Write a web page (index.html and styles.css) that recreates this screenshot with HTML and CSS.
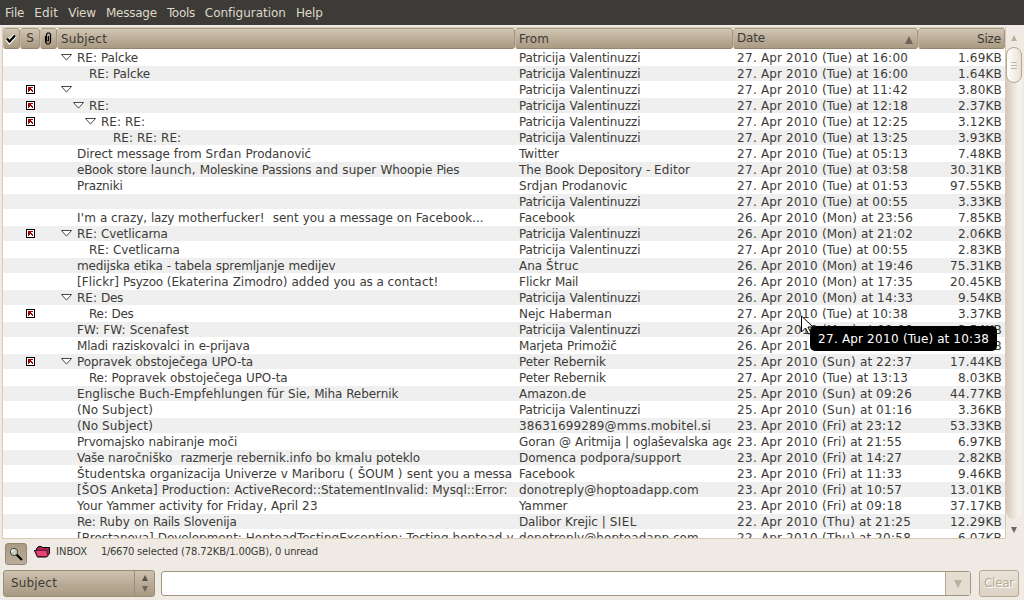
FILE: index.html
```html
<!DOCTYPE html>
<html lang="en">
<head>
<meta charset="utf-8">
<title>INBOX</title>
<link rel="stylesheet" href="styles.css">
</head>
<body>
<svg class="defs" width="0" height="0">
  <symbol id="reply" viewBox="0 0 9 9"><g shape-rendering="crispEdges"><path fill="#000" d="M0 0h9v9H0z"/><path fill="#fff" d="M1 1h7v7H1z"/><path fill="#a00000" d="M2 2h5v1H5v1h1v1h1v2H6V6H5V5H4v1H3v1H2z"/></g></symbol>
  <symbol id="open" viewBox="0 0 11 7"><path d="M.5 .5h10l-5 5.600z" fill="#fff" stroke="#333" stroke-width=".9"/></symbol>
</svg>
<nav class="menu"><a class="t">File</a><a class="t">Edit</a><a class="t">View</a><a class="t">Message</a><a class="t">Tools</a><a class="t">Configuration</a><a class="t">Help</a></nav>
<main class="pane">
  <section class="list">
    <header class="cols head">
      <div class="h icon check"><svg width="12" height="12" viewBox="0 0 12 12"><path d="M2 5.500l2.500 3L10 2.500" fill="none" stroke="#fff" stroke-width="4.500"/><path d="M2 5.500l2.500 3L10 2.500" fill="none" stroke="#000" stroke-width="2.400"/></svg></div>
      <div class="h icon">S</div>
      <div class="h icon clip"><svg width="8" height="13" viewBox="0 0 8 13"><path d="M1.500 4v6l1.500 2h2l1.500-2V2.500L5.500 1h-2L2.500 2.500v6.500h2V4" fill="none" stroke="#000" stroke-width="1.200"/></svg></div>
      <div class="h"><span class="t">Subject</span></div><div class="h"><span class="t">From</span></div>
      <div class="h date"><span class="t">Date</span><i class="sort"></i></div><div class="h right"><span class="t">Size</span></div>
    </header>
    <div class="rows" id="rows"></div>
  </section>
  <aside class="scroll"><i class="up"></i><div class="track"><div class="thumb"><b></b><b></b><b></b></div></div><i class="down"></i></aside>
</main>
<footer>
  <div class="status">
    <span class="find"><svg width="14" height="14" viewBox="0 0 14 14"><path d="M7 7l6 6" stroke="#000" stroke-width="2.200"/><circle cx="5" cy="5" r="3.600" fill="#c8cdbc" stroke="#444"/><path d="M3 5V3h2" stroke="#fff" fill="none"/></svg></span>
    <svg class="folder" width="17" height="13" viewBox="0 0 17 13"><path d="M2.500 5.500v-2l2-2h3l1 1h7v6l-3 3.500H3.500L.5 5.500z" fill="#a3224e" stroke="#000"/><path d="M1 5.500h11.500l1.500 6H3.500z" fill="#e64578" stroke="#000" stroke-width=".5"/></svg>
    <span class="box t">INBOX</span><span class="count t">1/6670 selected (78.72KB/1.00GB), 0 unread</span>
  </div>
  <div class="search">
    <div class="combo"><span class="t">Subject</span><span class="spin"><i class="up"></i><i class="down"></i></span></div>
    <div class="entry"><span class="field"></span><span class="drop"><i></i></span></div>
    <div class="clear"><span class="t">Clear</span></div>
  </div>
</footer>
<svg class="pointer" width="13" height="20" viewBox="0 0 13 20"><path d="M.5 1v16l4-4 3 6 2.500-1-3-6H12z" fill="#fff" stroke="#000"/></svg>
<div class="tip t">27. Apr 2010 (Tue) at 10:38</div>
<script src="rows.js"></script>
</body>
</html>
```
FILE: styles.css
```css
* { box-sizing: border-box; }
body { margin: 0; width: 1024px; height: 600px; overflow: hidden; background: #efebe4; color: #3c3b37; font: 12px "DejaVu Sans", sans-serif; display: flex; flex-direction: column; position: relative; }
.defs { position: absolute; }
.t { white-space: pre; }
.menu { height: 25px; flex: none; background: #3c3b37; color: #dfd8c8; display: flex; gap: 10px; padding-left: 5px; line-height: 27px; }
.pane { display: flex; height: 514px; flex: none; padding: 2px 0 0 2px; }
.list { width: 1004px; height: 512px; border: 1px solid #d8cbb5; overflow: hidden; display: flex; flex-direction: column; background: #fff; }
.cols { display: grid; grid-template-columns: 17px 20px 17px 458px 218px 185px 87px; }
.head { height: 21px; flex: none; }
.h { height: 21px; border: 1px solid #a39680; border-top: 1px solid #a89b87; border-bottom-color: #94866f; border-left-color: #c3b6a2; border-radius: 3px; background: linear-gradient(#d1c5b4, #bcae99 50%, #a99a82); line-height: 21px; padding: 0 3px; }
.icon { padding: 0; display: flex; align-items: center; justify-content: center; }
.check, .clip { padding-right: 1px; }
.date { display: flex; justify-content: space-between; align-items: center; padding-right: 4px; }
.right { text-align: right; }
.sort { border: 4px solid transparent; border-top: 0; border-bottom: 8px solid #6d6559; margin-top: 2px; }
.rows { flex: 1; overflow: hidden; }
.row { height: 16px; line-height: 18px; white-space: pre; }
.row:nth-child(even) { background: linear-gradient(#fff 1px, #efefef 1px); }
.row > span { overflow: hidden; height: 16px; padding-left: 4px; margin-right: 2px; }
.row > .flag { padding: 4px 0 0 6px; margin: 0; }
.flag svg { display: block; }
.row > .subject { display: flex; align-items: flex-start; }
.subject > svg, .subject > i { flex: none; width: 11px; height: 7px; margin: 5px 5px 0 0; }
.row > .d1 { padding-left: 16px; }
.row > .d2 { padding-left: 28px; }
.row > .d3 { padding-left: 40px; }
.row > .size { text-align: right; margin-right: 3px; }
.scroll { width: 18px; display: flex; flex-direction: column; align-items: center; padding: 8px 2px 5px 0; }
.up { border: 3px solid transparent; border-top: 0; border-bottom: 6px solid #b9ad97; }
.down { border: 3px solid transparent; border-bottom: 0; border-top: 6px solid #6d6559; }
.track { width: 16px; height: 472px; margin: 6px 0 8px; border-radius: 8px; background: linear-gradient(90deg, #d5cab9, #f3efe9 70%); }
.thumb { width: 16px; height: 36px; border: 1px solid #b5a78f; border-radius: 8px; background: linear-gradient(90deg, #fff, #e9e1d5); display: flex; flex-direction: column; gap: 2px; justify-content: center; align-items: center; }
.thumb b { width: 6px; height: 1px; background: #c2b7a4; }
.status { height: 31px; display: flex; padding: 4px 0 0 5px; font-size: 10px; line-height: 17px; }
.find { width: 22px; height: 22px; border: 1px solid #94866f; border-radius: 3px; background: linear-gradient(#a99a83, #bbae9b); display: flex; align-items: center; justify-content: center; }
.folder { margin: 2px 5px 0 7px; }
.box { width: 45px; }
.search { height: 27px; display: flex; padding-left: 3px; }
.combo { width: 152px; border: 1px solid #9b8d76; border-radius: 3px; background: linear-gradient(#cdc1b0, #b9ac97 50%, #a99a82); display: flex; justify-content: space-between; line-height: 25px; padding-left: 7px; }
.spin { width: 20px; border-left: 1px solid #9b8d76; display: flex; flex-direction: column; gap: 5px; align-items: center; justify-content: center; }
.spin .up { border-bottom-color: #595249; }
.entry { width: 810px; height: 25px; margin: 1px 8px 0 6px; border: 1px solid #a29580; border-radius: 3px; background: #fff; display: flex; }
.field { flex: 1; }
.drop { width: 25px; border-left: 1px solid #b5a993; background: #e5ddd1; display: flex; align-items: center; justify-content: center; }
.drop i { border: 4px solid transparent; border-bottom: 0; border-top: 8px solid #bdb19d; }
.clear { width: 40px; border: 1px solid #b5a993; border-radius: 3px; background: linear-gradient(#e9e2d8, #dcd2c4); color: #b7aa94; text-shadow: 1px 1px #fff; text-align: center; line-height: 25px; }
.tip { position: absolute; left: 810px; top: 326px; width: 187px; height: 25px; border-radius: 5px; background: #000; color: #fff; line-height: 26px; padding-left: 8px; }
.pointer { position: absolute; left: 801px; top: 315px; }
```
FILE: rows.js
```js
// [flagged, depth, expandable, subject, sender, date, size]
const P = "Patricija Valentinuzzi";
const mails = [
  [0, 0, 1, "RE: Palcke", P, "27. Apr 2010 (Tue) at 16:00", "1.69KB"],
  [0, 1, 0, "RE: Palcke", P, "27. Apr 2010 (Tue) at 16:00", "1.64KB"],
  [1, 0, 1, "", P, "27. Apr 2010 (Tue) at 11:42", "3.80KB"],
  [1, 1, 1, "RE:", P, "27. Apr 2010 (Tue) at 12:18", "2.37KB"],
  [1, 2, 1, "RE: RE:", P, "27. Apr 2010 (Tue) at 12:25", "3.12KB"],
  [0, 3, 0, "RE: RE: RE:", P, "27. Apr 2010 (Tue) at 13:25", "3.93KB"],
  [0, 0, 0, "Direct message from Srđan Prodanović", "Twitter", "27. Apr 2010 (Tue) at 05:13", "7.48KB"],
  [0, 0, 0, "eBook store launch, Moleskine Passions and super Whoopie Pies", "The Book Depository - Editor", "27. Apr 2010 (Tue) at 03:58", "30.31KB"],
  [0, 0, 0, "Prazniki", "Srdjan Prodanovic", "27. Apr 2010 (Tue) at 01:53", "97.55KB"],
  [0, 0, 0, "", P, "27. Apr 2010 (Tue) at 00:55", "3.33KB"],
  [0, 0, 0, "I'm a crazy, lazy motherfucker!  sent you a message on Facebook...", "Facebook", "26. Apr 2010 (Mon) at 23:56", "7.85KB"],
  [1, 0, 1, "RE: Cvetlicarna", P, "26. Apr 2010 (Mon) at 21:02", "2.06KB"],
  [0, 1, 0, "RE: Cvetlicarna", P, "27. Apr 2010 (Tue) at 00:55", "2.83KB"],
  [0, 0, 0, "medijska etika - tabela spremljanje medijev", "Ana Štruc", "26. Apr 2010 (Mon) at 19:46", "75.31KB"],
  [0, 0, 0, "[Flickr] Psyzoo (Ekaterina Zimodro) added you as a contact!", "Flickr Mail", "26. Apr 2010 (Mon) at 17:35", "20.45KB"],
  [0, 0, 1, "RE: Des", P, "26. Apr 2010 (Mon) at 14:33", "9.54KB"],
  [1, 1, 0, "Re: Des", "Nejc Haberman", "27. Apr 2010 (Tue) at 10:38", "3.37KB"],
  [0, 0, 0, "FW: FW: Scenafest", P, "26. Apr 2010 (Mon) at 09:08", "3.54KB"],
  [0, 0, 0, "Mladi raziskovalci in e-prijava", "Marjeta Primožič", "26. Apr 2010 (Mon) at 08:12", "8.20KB"],
  [1, 0, 1, "Popravek obstoječega UPO-ta", "Peter Rebernik", "25. Apr 2010 (Sun) at 22:37", "17.44KB"],
  [0, 1, 0, "Re: Popravek obstoječega UPO-ta", "Peter Rebernik", "27. Apr 2010 (Tue) at 13:13", "8.03KB"],
  [0, 0, 0, "Englische Buch-Empfehlungen für Sie, Miha Rebernik", "Amazon.de", "25. Apr 2010 (Sun) at 09:26", "44.77KB"],
  [0, 0, 0, "(No Subject)", P, "25. Apr 2010 (Sun) at 01:16", "3.36KB"],
  [0, 0, 0, "(No Subject)", "38631699289@mms.mobitel.si", "23. Apr 2010 (Fri) at 23:12", "53.33KB"],
  [0, 0, 0, "Prvomajsko nabiranje moči", "Goran @ Aritmija | oglaševalska age", "23. Apr 2010 (Fri) at 21:55", "6.97KB"],
  [0, 0, 0, "Vaše naročniško  razmerje rebernik.info bo kmalu poteklo", "Domenca podpora/support", "23. Apr 2010 (Fri) at 14:27", "2.82KB"],
  [0, 0, 0, "Študentska organizacija Univerze v Mariboru ( ŠOUM ) sent you a messa", "Facebook", "23. Apr 2010 (Fri) at 11:33", "9.46KB"],
  [0, 0, 0, "[ŠOS Anketa] Production: ActiveRecord::StatementInvalid: Mysql::Error:", "donotreply@hoptoadapp.com", "23. Apr 2010 (Fri) at 10:57", "13.01KB"],
  [0, 0, 0, "Your Yammer activity for Friday, April 23", "Yammer", "23. Apr 2010 (Fri) at 09:18", "37.17KB"],
  [0, 0, 0, "Re: Ruby on Rails Slovenija", "Dalibor Krejic | SIEL", "22. Apr 2010 (Thu) at 21:25", "12.29KB"],
  [0, 0, 0, "[Brostanova] Development: HoptoadTestingException: Testing hoptoad v", "donotreply@hoptoadapp.com", "22. Apr 2010 (Thu) at 20:58", "6.07KB"]
];
const icon = (id, w, h) => `<svg width="${w}" height="${h}"><use href="#${id}"/></svg>`;
const rows = document.getElementById("rows");
for (const [flag, depth, open, subject, from, date, size] of mails) {
  const row = document.createElement("div");
  row.className = "row cols";
  row.innerHTML = `<span></span><span class="flag">${flag ? icon("reply", 9, 9) : ""}</span><span></span>` +
    `<span class="subject d${depth}">${open ? icon("open", 11, 7) : "<i></i>"}<span class="t">${subject}</span></span>` +
    `<span class="t">${from}</span><span class="t">${date}</span><span class="size t">${size}</span>`;
  rows.append(row);
}

// Space each word so that its letters advance by whole pixels on average.
const ctx = document.createElement("canvas").getContext("2d");
for (const el of document.querySelectorAll(".t")) {
  const style = getComputedStyle(el);
  ctx.font = `${style.fontSize} "DejaVu Sans"`;
  const parts = el.textContent.split(/( +)/).filter(Boolean);
  el.textContent = "";
  for (const part of parts) {
    let extra = 0;
    for (const ch of part) {
      const w = ctx.measureText(ch).width;
      extra += Math.round(w) - w;
    }
    const word = document.createElement("span");
    word.textContent = part;
    word.style.letterSpacing = (extra / part.length).toFixed(3) + "px";
    el.append(word);
  }
}
```
